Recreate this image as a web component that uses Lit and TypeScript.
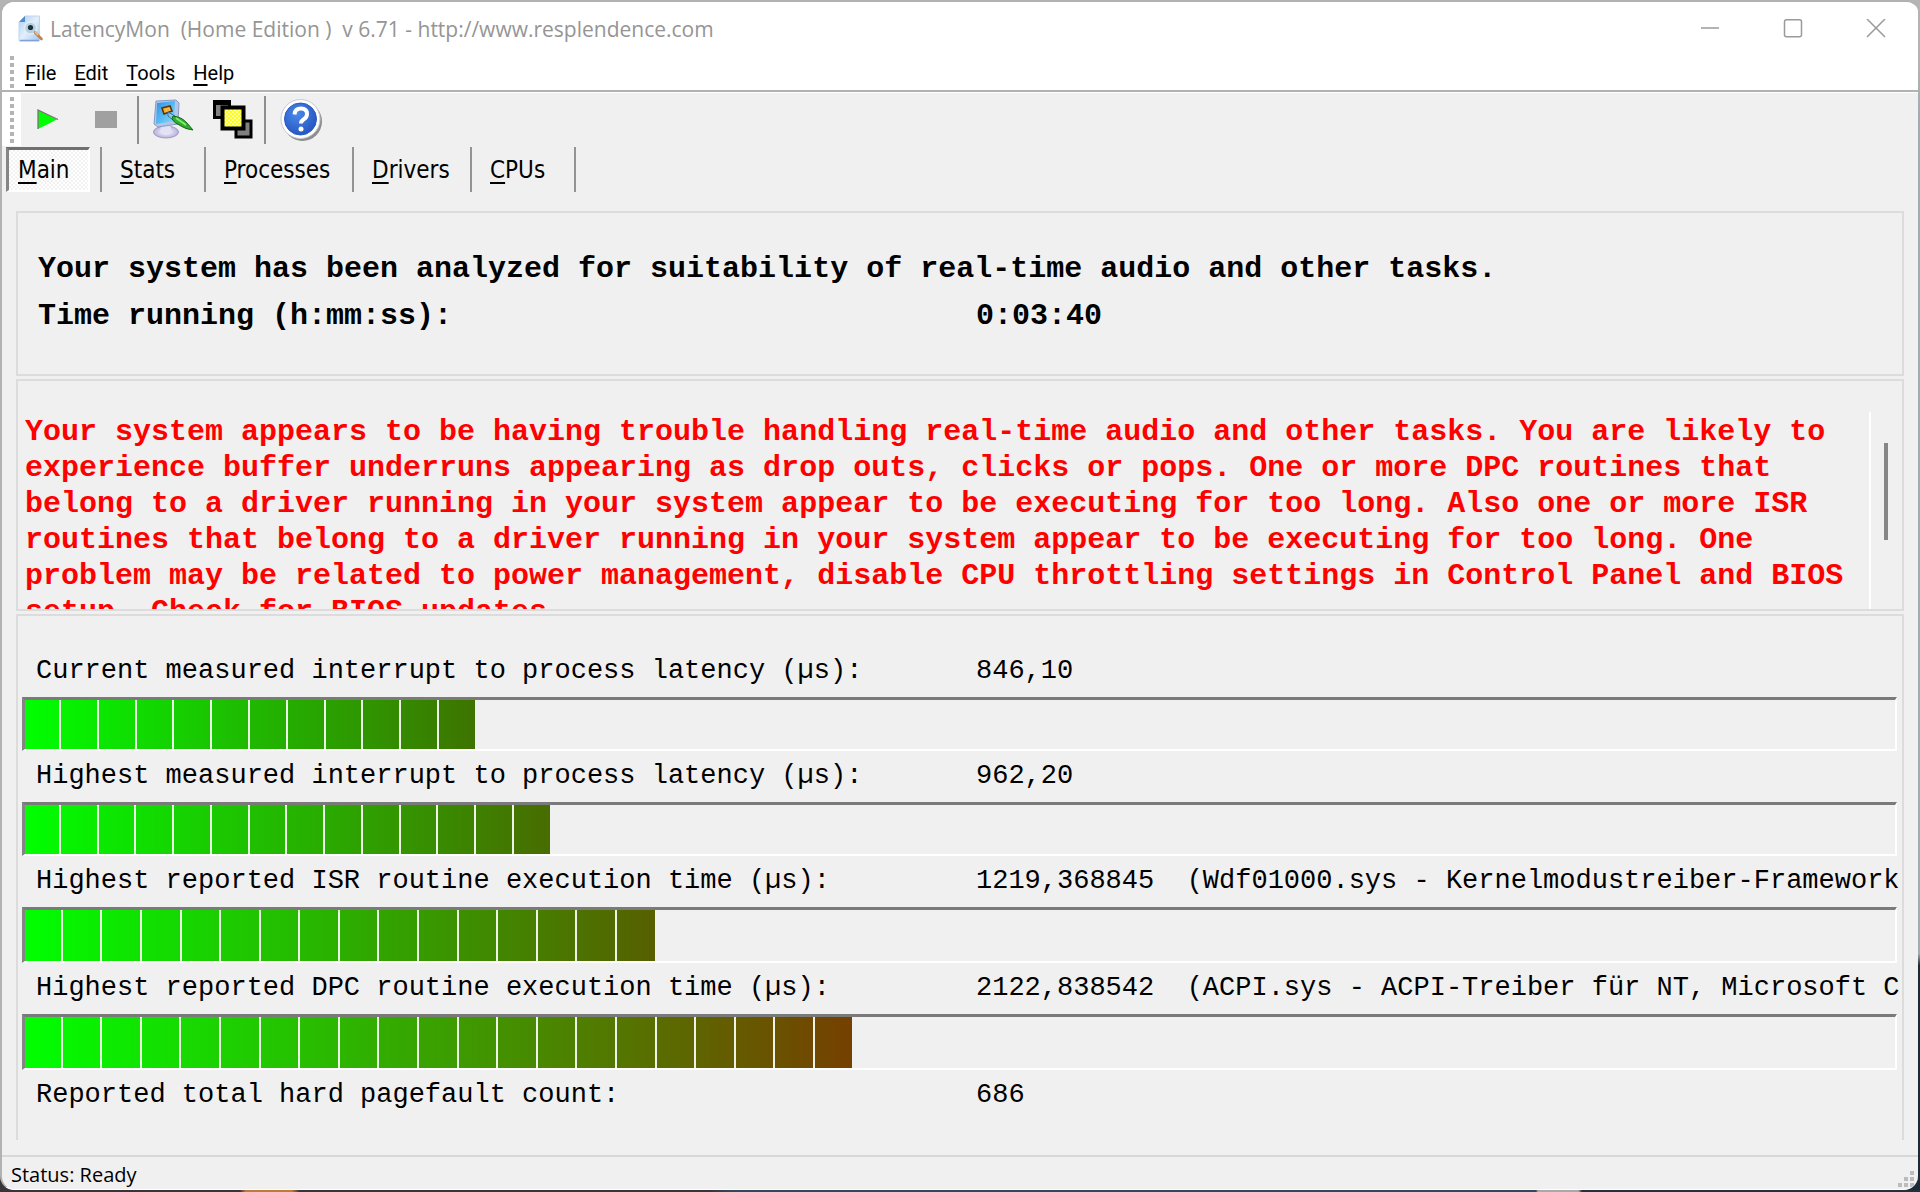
import { LitElement, html, css, svg } from "lit";
import { customElement, property, state } from "lit/decorators.js";
import { styleMap } from "lit/directives/style-map.js";
import { classMap } from "lit/directives/class-map.js";

interface Meter {
  label: string;
  value: string;
  percent: number;
  segments: number;
  end: string;
  tall: boolean;
}

const METERS: Meter[] = [
  { label: "Current measured interrupt to process latency (µs):", value: "846,10", percent: 24.05, segments: 12, end: "#3e7300", tall: false },
  { label: "Highest measured interrupt to process latency (µs):", value: "962,20", percent: 28.06, segments: 14, end: "#486c00", tall: false },
  { label: "Highest reported ISR routine execution time (µs):", value: "1219,368845  (Wdf01000.sys - Kernelmodustreiber-Framework", percent: 33.67, segments: 16, end: "#575f00", tall: true },
  { label: "Highest reported DPC routine execution time (µs):", value: "2122,838542  (ACPI.sys - ACPI-Treiber für NT, Microsoft C", percent: 44.25, segments: 21, end: "#754000", tall: true },
];

const MENUS = ["File", "Edit", "Tools", "Help"];
const TABS = ["Main", "Stats", "Processes", "Drivers", "CPUs"];

const accel = (word: string) =>
  html`<span class="accel">${word[0]}</span>${word.slice(1)}`;

const appIcon = svg`
  <svg width="28" height="28" viewBox="0 0 28 28" aria-hidden="true">
    <defs>
      <linearGradient id="page" x1="0" y1="0" x2="1" y2="1">
        <stop offset="0" stop-color="#a9cdf3"/><stop offset=".5" stop-color="#e3effc"/><stop offset="1" stop-color="#a5c6ee"/>
      </linearGradient>
    </defs>
    <path d="M8 1H22.500V26H2V7Z" fill="url(#page)" stroke="#c3d6ec"/>
    <path d="M8 1V7H2Z" fill="#4f8bd0"/>
    <path d="M3 25.500H22" stroke="#7fa3d8" stroke-width="1.500"/>
    <circle cx="13.500" cy="13" r="6" fill="#b4d0de" stroke="#e2ecf4" stroke-width="1.500"/>
    <circle cx="13.500" cy="12.500" r="2.600" fill="#1c323a"/>
    <path d="M18 17.500L24.500 24" stroke="#bd8250" stroke-width="2.600" stroke-linecap="round"/>
    <path d="M18 17L21 20" stroke="#ecc19a" stroke-width="1.600"/>
  </svg>`;

const playIcon = svg`
  <svg width="24" height="24" viewBox="0 0 24 24" aria-hidden="true">
    <path d="M2 2V21L21 11.500Z" fill="#00ff00"/>
    <path d="M2 21V2L22 11.500" fill="none" stroke="#7d6f7d" stroke-width="1.300"/>
  </svg>`;

const stopIcon = svg`
  <svg width="24" height="24" viewBox="0 0 24 24" aria-hidden="true">
    <rect x="1" y="3" width="22" height="17" fill="#a0a0a0"/>
  </svg>`;

const monitorIcon = svg`
  <svg width="42" height="42" viewBox="0 0 42 42" aria-hidden="true">
    <defs>
      <linearGradient id="screen" x1="0" y1="0" x2="1" y2="1">
        <stop offset="0" stop-color="#2f8fe4"/><stop offset="1" stop-color="#7fe0ff"/>
      </linearGradient>
      <radialGradient id="base"><stop offset="0" stop-color="#ffffff"/><stop offset="1" stop-color="#b4b1da"/></radialGradient>
    </defs>
    <ellipse cx="14" cy="33" rx="12.500" ry="6" fill="url(#base)" stroke="#a09dc2"/>
    <path d="M9 27L18 26L20 33Q14 36 8 33Z" fill="#e3e1f6"/>
    <path d="M4 2L24 1L27 4L26 25L6 28L2 25Z" fill="#b4c6e6" stroke="#8798c6"/>
    <path d="M5 4L23 2L22 22L4 25Z" fill="url(#screen)"/>
    <path d="M10 9L18 7L20 12L12 15Z" fill="#f6b43c" stroke="#5a3305" stroke-width="1.600"/>
    <path d="M16 13L23 17L21 21L16 17Z" fill="#8cc4f0" stroke="#3b6f9c"/>
    <path d="M21 17Q30 18 35 24L41 31Q33 30 29 27Q22 24 20 20Z" fill="#2fae2c" stroke="#14691a"/>
    <path d="M24 19L34 26" stroke="#8bea78" stroke-width="1.600"/>
  </svg>`;

const windowsIcon = svg`
  <svg width="42" height="42" viewBox="0 0 42 42" aria-hidden="true">
    <defs>
      <pattern id="check" width="4" height="4" patternUnits="userSpaceOnUse">
        <rect width="4" height="4" fill="#ffff00"/><rect width="2" height="2" fill="#ffffb0"/><rect x="2" y="2" width="2" height="2" fill="#ffffb0"/>
      </pattern>
    </defs>
    <rect x="2.500" y="3.500" width="15" height="15" fill="#808080" stroke="#000" stroke-width="3"/>
    <path d="M1 3.500H19" stroke="#000" stroke-width="5"/>
    <rect x="24" y="22" width="15" height="16" fill="#808080" stroke="#000" stroke-width="3"/>
    <rect x="10.500" y="8.500" width="21" height="21" fill="url(#check)" stroke="#000" stroke-width="4"/>
  </svg>`;

const helpIcon = svg`
  <svg width="46" height="46" viewBox="0 0 46 46" aria-hidden="true">
    <defs>
      <radialGradient id="blue" cx=".4" cy=".35" r=".7"><stop offset="0" stop-color="#4a8aea"/><stop offset="1" stop-color="#2453c0"/></radialGradient>
    </defs>
    <circle cx="24.500" cy="24.500" r="19.500" fill="#8d8d8d"/>
    <circle cx="22.500" cy="22" r="19.500" fill="#fff" stroke="#c9cbd2"/>
    <circle cx="22.500" cy="22" r="16" fill="url(#blue)" stroke="#2c5ac4"/>
    <path d="M16.500 17.500Q17 11.500 23 11.500Q29 11.500 29 17Q29 20.500 25.500 22.500Q23 24 23 26.500" fill="none" stroke="#fff" stroke-width="4"/>
    <circle cx="23" cy="32" r="2.500" fill="#fff"/>
  </svg>`;

@customElement("latency-meter")
export class LatencyMeter extends LitElement {
  @property({ attribute: false }) meter!: Meter;

  static styles = css`
    :host { display: block; }
    .row {
      display: flex;
      padding: 0 0 1px 14px;
      font: 27px/50px "Liberation Mono", "Courier New", monospace;
      color: #000;
      white-space: pre;
      overflow: hidden;
    }
    .label { flex: 0 0 940px; }
    .value { flex: 1 1 0; min-width: 0; overflow: hidden; }
    .bar {
      box-sizing: border-box;
      height: 54px;
      margin-right: 4px;
      border: 2px solid #fff;
      border-top: 3px solid #7a7a7a;
      border-left: 3px solid #858585;
    }
    .tall { height: 56px; }
    .fill { display: flex; height: 100%; }
    .segment { flex: 1 1 0; border-right: 2px solid #edf3e6; box-sizing: border-box; }
    .segment:first-child { flex-grow: 0.95; }
    .segment:last-child { border-right: 0; }
  `;

  render() {
    const m = this.meter;
    const fill = { width: `${m.percent}%`, background: `linear-gradient(90deg, #00ff00, ${m.end})` };
    return html`
      <div class="row"><span class="label" id="name">${m.label}</span><span class="value">${m.value}</span></div>
      <div class=${classMap({ bar: true, tall: m.tall })} role="meter" aria-labelledby="name" aria-valuenow=${m.percent}>
        <div class="fill" style=${styleMap(fill)}>
          ${Array.from({ length: m.segments }, () => html`<i class="segment"></i>`)}
        </div>
      </div>
    `;
  }
}

@customElement("app-root")
export class AppRoot extends LitElement {
  @state() private tab = "Main";

  static styles = css`
    :host {
      display: flex;
      flex-direction: column;
      box-sizing: border-box;
      min-height: 100vh;
      padding: 0 2px 2px 0;
      background:
        linear-gradient(90deg, #3a3438 0 12.5%, #c07a3c 12.8% 15.2%, #3a3438 15.6% 37%, #2f4a5e 38% 80%, #a9a9a9 80.1% 82.2%, #24313c 82.4%) bottom / 100% 2px no-repeat,
        linear-gradient(#b4b4b4 0 5%, #a0acb0 10% 80%, #1c2a35 81%) right / 50% 100% no-repeat,
        linear-gradient(#b4b4b4 0 94%, #38343a 95%);
      font-family: "Open Sans", "Noto Sans", sans-serif;
      color: #000;
    }
    * { box-sizing: border-box; }
    button {
      margin: 0;
      padding: 0;
      border: 0;
      background: none;
      color: inherit;
      font: inherit;
    }
    svg { display: block; }
    .accel { text-decoration: underline; text-decoration-thickness: 2px; text-underline-offset: 4px; }

    .window {
      flex: 1;
      display: flex;
      flex-direction: column;
      border: 2px solid #b2b2b2;
      border-right-width: 0;
      border-bottom: 1px solid #fff;
      border-radius: 14px 12px 14px 14px;
      background: #f0f0f0;
      overflow: hidden;
    }

    .titlebar {
      display: flex;
      align-items: center;
      height: 54px;
      padding: 0 1px 0 15px;
      background: #fff;
    }
    .title {
      flex: 1;
      margin: 0 0 0 5px;
      font-size: 21px;
      font-weight: 400;
      line-height: 30px;
      color: #959595;
      white-space: pre;
    }
    .caption {
      display: flex;
      align-items: center;
      justify-content: center;
      width: 83px;
      height: 50px;
    }

    .menubar {
      display: flex;
      height: 36px;
      padding-left: 8px;
      background: #fff;
      border-bottom: 2px solid #b2b2b2;
      font: 20px/34px Roboto, "Open Sans", sans-serif;
    }
    .grip {
      width: 4px;
      margin-right: 11px;
      background: repeating-linear-gradient(#b4b4b4 0 4px, #fff 4px 7px);
    }
    .menu { margin-right: 18px; }

    .toolbar {
      display: flex;
      align-items: center;
      height: 54px;
      border-top: 1px solid #fff;
    }
    .toolgrip { display: flex; align-self: stretch; width: 19px; padding: 4px 0 0 8px; background: #fff; }
    .toolgrip .grip { flex: none; }
    .tool { display: flex; justify-content: center; padding-top: 1px; }
    .divider { width: 2px; height: 48px; background: #8e8e8e; }
    .start { width: 54px; }
    .stop { width: 62px; }
    .options { width: 68px; }
    .views { width: 52px; margin-right: 5px; }
    .help { width: 70px; }

    .tabs {
      display: grid;
      grid-template-columns: 96px 104px 148px 118px 104px;
      height: 46px;
      margin-left: 4px;
      padding-top: 1px;
      font: 24px/40px "DejaVu Sans Condensed", "DejaVu Sans", sans-serif;
    }
    .tab { display: flex; border-right: 2px solid #949494; }
    .face {
      flex: 1;
      padding-left: 18px;
      text-align: left;
      white-space: nowrap;
    }
    .face.active {
      margin-right: 10px;
      padding-left: 9px;
      border: 2px solid #fff;
      border-top: 3px solid #707070;
      border-left: 3px solid #858585;
      background: repeating-conic-gradient(#ffffff 0 25%, #f2f2f2 0 50%) 0 0 / 4px 4px;
    }

    .content {
      flex: 1;
      display: flex;
      flex-direction: column;
      padding: 19px 14px 15px 14px;
    }
    .group { border: 2px solid #dcdcdc; }
    .summary {
      height: 165px;
      padding: 33px 0 0 20px;
      font: bold 30px/47px "Liberation Mono", "Courier New", monospace;
      white-space: nowrap;
      overflow: hidden;
    }
    .summary p { margin: 0; }
    .elapsed { display: flex; }
    .elapsed-label { flex: 0 0 938px; }

    .verdict {
      display: flex;
      height: 232px;
      margin: 3px 0;
      padding: 31px 0 0 7px;
      overflow: hidden;
    }
    .message {
      flex: 1;
      margin: 0;
      padding: 2px 20px 0 0;
      border-right: 2px solid #fff;
      font: bold 30px/36px "Liberation Mono", "Courier New", monospace;
      color: #ff0000;
      overflow: hidden;
    }
    .scroll { width: 31px; padding: 31px 0 0 13px; }
    .thumb { width: 4px; height: 97px; background: #868686; }

    .meters {
      flex: 1;
      padding: 30px 1px 0 4px;
      border-bottom: 0;
    }
    .count {
      display: flex;
      margin: 0;
      padding: 0 0 0 14px;
      font: 27px/50px "Liberation Mono", "Courier New", monospace;
    }
    .count-label { flex: 0 0 940px; }

    .status {
      display: flex;
      align-items: flex-end;
      justify-content: space-between;
      height: 34px;
      padding-left: 9px;
      border-top: 2px solid #d7d7d7;
      font-size: 20px;
      line-height: 28px;
    }
  `;

  render() {
    return html`
      <div class="window">
        <header class="titlebar">
          ${appIcon}
          <h1 class="title">LatencyMon  (Home Edition )  v 6.71 - http://www.resplendence.com</h1>
          <button class="caption" aria-label="Minimize">
            <svg width="20" height="20" viewBox="0 0 20 20"><path d="M1 9H19" stroke="#9a9a9a" stroke-width="1.500"/></svg>
          </button>
          <button class="caption" aria-label="Maximize">
            <svg width="20" height="20" viewBox="0 0 20 20"><rect x="1.500" y="0.800" width="17" height="17" rx="2" fill="none" stroke="#9a9a9a" stroke-width="1.500"/></svg>
          </button>
          <button class="caption" aria-label="Close">
            <svg width="20" height="20" viewBox="0 0 20 20"><path d="M1 0L19 18M19 0L1 18" stroke="#9a9a9a" stroke-width="1.500"/></svg>
          </button>
        </header>

        <nav class="menubar" aria-label="Menu">
          <span class="grip"></span>
          ${MENUS.map((m) => html`<button class="menu">${accel(m)}</button>`)}
        </nav>

        <div class="toolbar" role="toolbar" aria-label="Monitor">
          <span class="toolgrip"><span class="grip"></span></span>
          <button class="tool start" aria-label="Start">${playIcon}</button>
          <button class="tool stop" aria-label="Stop">${stopIcon}</button>
          <span class="divider"></span>
          <button class="tool options" aria-label="Options">${monitorIcon}</button>
          <button class="tool views" aria-label="Windows">${windowsIcon}</button>
          <span class="divider"></span>
          <button class="tool help" aria-label="Help">${helpIcon}</button>
        </div>

        <div class="tabs" role="tablist">
          ${TABS.map(
            (t) => html`<div class="tab">
              <button
                role="tab"
                aria-selected=${t === this.tab}
                class=${classMap({ face: true, active: t === this.tab })}
                @click=${() => (this.tab = t)}
              >${accel(t)}</button>
            </div>`
          )}
        </div>

        <main class="content">
          <section class="group summary">
            <p>Your system has been analyzed for suitability of real-time audio and other tasks.</p>
            <p class="elapsed"><span class="elapsed-label">Time running (h:mm:ss):</span><span>0:03:40</span></p>
          </section>
          <section class="group verdict">
            <p class="message">Your system appears to be having trouble handling real-time audio and other tasks. You are likely to experience buffer underruns appearing as drop outs, clicks or pops. One or more DPC routines that belong to a driver running in your system appear to be executing for too long. Also one or more ISR routines that belong to a driver running in your system appear to be executing for too long. One problem may be related to power management, disable CPU throttling settings in Control Panel and BIOS setup. Check for BIOS updates.</p>
            <div class="scroll"><div class="thumb"></div></div>
          </section>
          <section class="group meters">
            ${METERS.map((m) => html`<latency-meter .meter=${m}></latency-meter>`)}
            <p class="count"><span class="count-label">Reported total hard pagefault count:</span><span>686</span></p>
          </section>
        </main>

        <footer class="status">
          <span>Status: Ready</span>
          <svg width="20" height="18" viewBox="0 0 20 18" aria-hidden="true">
            <path d="M12 0h4v4h-4zM6 6h4v4h-4zM12 6h4v4h-4zM0 12h4v4h-4zM6 12h4v4h-4zM12 12h4v4h-4z" fill="#bcbcbc"/>
          </svg>
        </footer>
      </div>
    `;
  }
}
